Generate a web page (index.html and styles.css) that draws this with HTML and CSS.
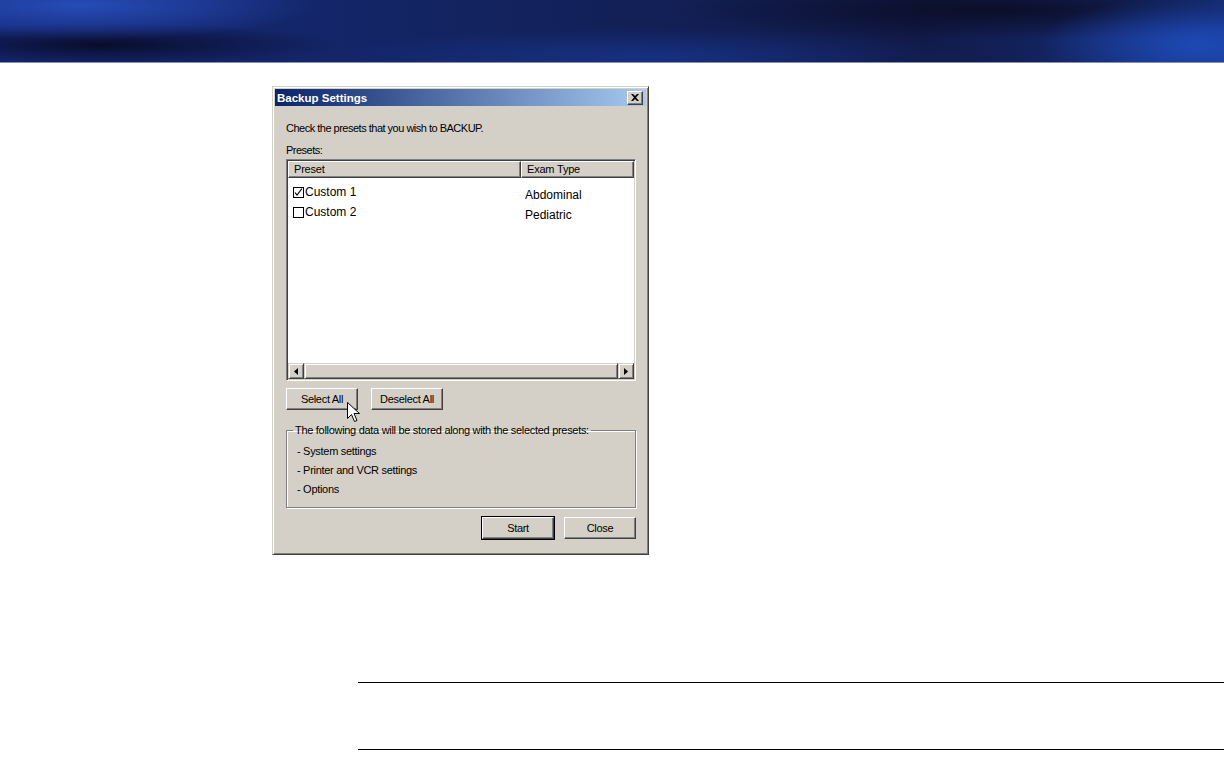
FILE: index.html
```html
<!DOCTYPE html>
<html lang="en">
<head>
    <meta charset="UTF-8">
    <meta name="viewport" content="width=device-width, initial-scale=1.0">
    <title>Backup Settings</title>
    <link rel="stylesheet" href="styles.css">
</head>
<body>
    <div class="banner"></div>
    <div class="page">
        <div class="window">
            <div class="titlebar">
                <span class="title">Backup Settings</span>
                <span class="close-btn">
                    <svg width="8" height="7" viewBox="0 0 8 7"><path d="M0 0h2l2 2 2-2h2L5 3.5 8 7H6L4 5 2 7H0l3-3.5z" fill="#000"/></svg>
                </span>
            </div>
            <div class="dialog-body">
                <p class="prompt">Check the presets that you wish to BACKUP.</p>
                <p class="label">Presets:</p>
                <div class="listview">
                    <div class="list-header">
                        <div class="col-head col-preset">Preset</div>
                        <div class="col-head col-exam">Exam Type</div>
                    </div>
                    <div class="list-rows">
                        <div class="row">
                            <div class="cell col-preset"><span class="check checked"><svg width="9" height="9" viewBox="0 0 9 9"><path d="M1 4.5l2 2.5L8 0.5" stroke="#000" stroke-width="1.2" fill="none"/></svg></span>Custom 1</div>
                            <div class="cell col-exam">Abdominal</div>
                        </div>
                        <div class="row">
                            <div class="cell col-preset"><span class="check"></span>Custom 2</div>
                            <div class="cell col-exam">Pediatric</div>
                        </div>
                    </div>
                    <div class="hscroll">
                        <span class="arrow-btn"><svg width="4" height="7" viewBox="0 0 4 7"><path d="M4 0v7L0 3.5z" fill="#000"/></svg></span>
                        <span class="thumb"></span>
                        <span class="arrow-btn"><svg width="4" height="7" viewBox="0 0 4 7"><path d="M0 0v7l4-3.5z" fill="#000"/></svg></span>
                    </div>
                </div>
                <div class="select-row">
                    <button class="btn">Select All</button>
                    <button class="btn">Deselect All</button>
                    <svg class="cursor" width="13" height="21" viewBox="0 0 13 21"><path d="M0.5 0.5v16l4-4 3 7 2.5-1-3-7h5.5z" fill="#fff" stroke="#000" stroke-width="1"/></svg>
                </div>
                <fieldset class="group">
                    <legend>The following data will be stored along with the selected presets:</legend>
                    <ul class="data-list">
                        <li>- System settings</li>
                        <li>- Printer and VCR settings</li>
                        <li>- Options</li>
                    </ul>
                </fieldset>
                <div class="actions">
                    <button class="btn btn-default">Start</button>
                    <button class="btn">Close</button>
                </div>
            </div>
        </div>
    </div>
    <div class="rule-box"></div>
</body>
</html>
```

FILE: styles.css
```css
body {
    margin: 0;
    padding: 0;
    background-color: #fff;
    font-family: "Liberation Sans", Arial, sans-serif;
}

.banner {
    height: 62px;
    border-bottom: 1px solid #8890a8;
    background-color: #121f5c;
    background-image:
        radial-gradient(ellipse 240px 35px at 80px 5px, rgba(40, 80, 190, 0.9), transparent),
        radial-gradient(ellipse 160px 50px at 1200px 45px, rgba(30, 75, 185, 0.95), transparent),
        radial-gradient(ellipse 320px 30px at 650px 58px, rgba(25, 60, 160, 0.6), transparent),
        radial-gradient(ellipse 240px 22px at 100px 45px, rgba(8, 10, 35, 0.9), transparent),
        radial-gradient(ellipse 320px 30px at 1000px 10px, rgba(10, 12, 35, 0.9), transparent),
        linear-gradient(90deg, #15297a, #13235f 40%, #111a48 75%, #16307f);
}

.page {
    padding: 23px 0 0 272px;
}

.window {
    width: 377px;
    box-sizing: border-box;
    background-color: #d4d0c8;
    border: 1px solid;
    border-color: #d4d0c8 #404040 #404040 #d4d0c8;
    box-shadow: inset 1px 1px 0 #fff, inset -1px -1px 0 #808080;
    padding: 2px;
    font-size: 11px;
    color: #000;
}

.titlebar {
    height: 17px;
    display: flex;
    align-items: center;
    justify-content: space-between;
    padding: 0 3px 0 2px;
    background: linear-gradient(90deg, #0a246a, #a6caf0);
}

.title {
    color: #fff;
    font-weight: bold;
    font-size: 11.5px;
}

.close-btn {
    width: 16px;
    height: 14px;
    box-sizing: border-box;
    background-color: #d4d0c8;
    border: 1px solid;
    border-color: #fff #404040 #404040 #fff;
    box-shadow: inset -1px -1px 0 #808080;
    display: flex;
    align-items: center;
    justify-content: center;
}

.dialog-body {
    padding: 16px 10px 13px 11px;
}

.prompt,
.label {
    margin: 0;
    line-height: 13px;
    letter-spacing: -0.5px;
}

.label {
    margin-top: 9px;
}

.listview {
    margin-top: 2px;
    height: 222px;
    box-sizing: border-box;
    border: 1px solid;
    border-color: #808080 #fff #fff #808080;
    box-shadow: inset 1px 1px 0 #404040, inset -1px -1px 0 #d4d0c8;
    padding: 1px;
    background-color: #fff;
    display: flex;
    flex-direction: column;
}

.list-header {
    display: flex;
    height: 17px;
    flex-shrink: 0;
}

.col-head {
    box-sizing: border-box;
    background-color: #d4d0c8;
    border: 1px solid;
    border-color: #fff #404040 #404040 #fff;
    box-shadow: inset -1px -1px 0 #808080;
    padding-left: 5px;
    line-height: 15px;
    font-size: 11px;
    letter-spacing: -0.2px;
}

.col-head.col-preset {
    width: 233px;
}

.col-head.col-exam {
    flex: 1;
}

.list-rows {
    flex: 1;
    padding-top: 4px;
}

.row {
    display: flex;
    height: 20px;
    font-size: 12px;
}

.cell.col-preset {
    width: 235px;
    display: flex;
    align-items: center;
    padding-left: 5px;
    box-sizing: border-box;
}

.cell.col-exam {
    padding-top: 6px;
    padding-left: 2px;
}

.check {
    width: 11px;
    height: 11px;
    box-sizing: border-box;
    border: 1px solid #000;
    margin-right: 1px;
    display: inline-flex;
    align-items: center;
    justify-content: center;
}

.hscroll {
    height: 16px;
    display: flex;
    flex-shrink: 0;
    background-color: #e8e6e0;
}

.arrow-btn,
.thumb {
    box-sizing: border-box;
    height: 16px;
    background-color: #d4d0c8;
    border: 1px solid;
    border-color: #d4d0c8 #404040 #404040 #d4d0c8;
    box-shadow: inset 1px 1px 0 #fff, inset -1px -1px 0 #808080;
}

.arrow-btn {
    width: 16px;
    display: flex;
    align-items: center;
    justify-content: center;
}

.thumb {
    flex: 1;
}

.select-row {
    position: relative;
    display: flex;
    gap: 13px;
    margin-top: 7px;
}

.btn {
    width: 72px;
    height: 22px;
    box-sizing: border-box;
    background-color: #d4d0c8;
    border: 1px solid;
    border-color: #fff #404040 #404040 #fff;
    box-shadow: inset -1px -1px 0 #808080;
    font-family: "Liberation Sans", Arial, sans-serif;
    font-size: 11px;
    letter-spacing: -0.3px;
    color: #000;
    padding: 0;
    cursor: pointer;
}

.btn-default {
    outline: 1px solid #000;
    outline-offset: 0;
}

.cursor {
    position: absolute;
    left: 61px;
    top: 14px;
}

.group {
    margin: 14px 0 0 0;
    padding: 5px 6px 8px 6px;
    border: 1px solid #808080;
    box-shadow: 1px 1px 0 #fff, inset 1px 1px 0 #fff;
    min-width: 0;
}

.group legend {
    padding: 0 2px;
    line-height: 13px;
    letter-spacing: -0.3px;
    font-size: 11px;
}

.data-list {
    list-style: none;
    margin: 0;
    padding: 0 0 0 4px;
}

.data-list li {
    line-height: 19px;
    letter-spacing: -0.3px;
}

.actions {
    display: flex;
    justify-content: flex-end;
    gap: 10px;
    margin-top: 9px;
}

.rule-box {
    margin: 127px 0 0 358px;
    height: 66px;
    border-top: 1px solid #000;
    border-bottom: 1px solid #000;
}
```
